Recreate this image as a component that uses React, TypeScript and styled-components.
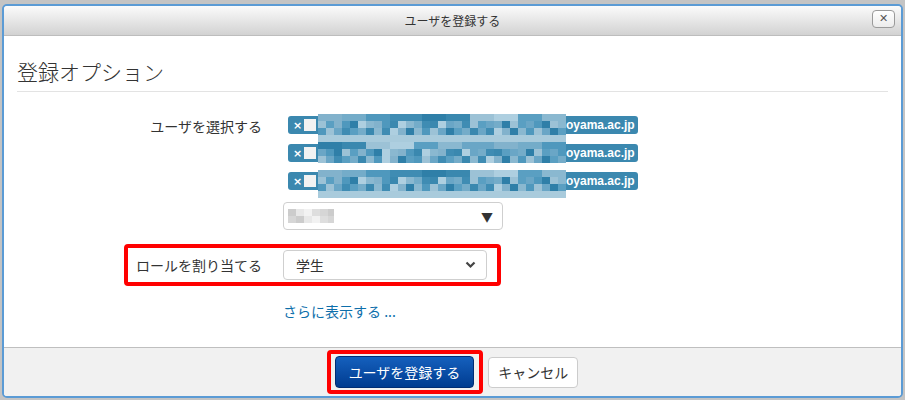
import React from 'react';
import styled, { createGlobalStyle } from 'styled-components';

const GlobalStyle = createGlobalStyle`
    html, body {
        margin: 0;
        padding: 0;
        background: #c4c4c4;
    }
    body {
        font-family: "Noto Sans CJK JP", "Noto Sans", "Liberation Sans", sans-serif;
        color: #333;
    }
`;

const Frame = styled.div`
    width: 905px;
    height: 400px;
    padding: 4px 2px 2px 2px;
    box-sizing: border-box;
`;

const Dialog = styled.div`
    height: 394px;
    box-sizing: border-box;
    border: 2px solid #5b9bd5;
    border-radius: 5px;
    background: #fff;
    display: flex;
    flex-direction: column;
    overflow: hidden;
`;

const Header = styled.div`
    position: relative;
    height: 29px;
    flex-shrink: 0;
    display: flex;
    align-items: center;
    justify-content: center;
    background: linear-gradient(#fbfbfb, #d2d2d2);
    border-bottom: 1px solid #bdbdbd;
    border-radius: 3px 3px 0 0;
    font-size: 12px;
    color: #333;
`;

const CloseButton = styled.button`
    position: absolute;
    right: 6px;
    top: 4px;
    width: 23px;
    height: 18px;
    padding: 0;
    border: 1px solid #9a9a9a;
    border-radius: 4px;
    background: linear-gradient(#ffffff, #ececec);
    color: #555;
    font-size: 11px;
    font-weight: bold;
    line-height: 16px;
    font-family: "DejaVu Sans", sans-serif;
`;

const Body = styled.div`
    flex: 1;
    padding: 0 13px;
`;

const Heading = styled.h3`
    margin: 20px 0 0;
    padding-bottom: 4px;
    border-bottom: 1px solid #e3e3e3;
    font-size: 21px;
    font-weight: 300;
    line-height: 31px;
    color: #333;
`;

const FormRow = styled.div`
    display: grid;
    grid-template-columns: 245px 1fr;
    column-gap: 21px;
    margin-top: 24px;
`;

const Label = styled.div`
    text-align: right;
    font-size: 14px;
    line-height: 20px;
`;

const ChipList = styled.div`
    padding-left: 5px;
`;

const Chip = styled.div`
    display: flex;
    align-items: center;
    width: 350px;
    height: 18px;
    margin-bottom: 10px;
    border-radius: 3px;
    background: #3b88af;
    color: #fff;
    font-family: "Liberation Sans", sans-serif;
    font-size: 12px;
    font-weight: bold;
`;

const ChipRemove = styled.span`
    width: 9px;
    margin-left: 5px;
    font-size: 11px;
    font-family: "DejaVu Sans", sans-serif;
`;

const Avatar = styled.span`
    width: 12px;
    height: 12px;
    margin-left: 2px;
    background: #f2f2f2;
`;

const MosaicSlot = styled.span`
    position: relative;
    width: 248px;
    align-self: stretch;
    margin-left: 2px;
`;

const MosaicArt = styled.svg`
    position: absolute;
    left: 0;
    top: -2px;
`;

const PlainSelect = styled.div`
    display: flex;
    align-items: center;
    justify-content: space-between;
    width: 220px;
    height: 28px;
    box-sizing: border-box;
    margin-top: 12px;
    padding: 0 9px 0 4px;
    border: 1px solid #cfcfcf;
    border-radius: 4px;
    font-size: 12px;
`;

const Highlight = styled.div`
    display: grid;
    grid-template-columns: 134px 204px;
    column-gap: 21px;
    align-items: center;
    width: 377px;
    height: 42px;
    box-sizing: border-box;
    margin: 14px 0 0 107px;
    border: 4px solid #ff0000;
    border-radius: 4px;
`;

const RoleSelect = styled.div`
    display: flex;
    align-items: center;
    justify-content: space-between;
    height: 30px;
    box-sizing: border-box;
    padding: 0 10px 0 12px;
    border: 1px solid #cfcfcf;
    border-radius: 4px;
    font-size: 14px;
`;

const MoreLink = styled.a`
    display: block;
    margin: 15px 0 0 266px;
    color: #0d6fab;
    font-size: 14px;
    line-height: 20px;
    text-decoration: none;
`;

const Footer = styled.div`
    height: 48px;
    flex-shrink: 0;
    display: flex;
    align-items: center;
    justify-content: center;
    gap: 5px;
    border-top: 1px solid #bfbfbf;
    background: #f1f1f1;
`;

const RedFrame = styled.div`
    display: flex;
    align-items: center;
    height: 44px;
    box-sizing: border-box;
    padding: 0 5px 0 4px;
    border: 4px solid #ff0000;
    border-radius: 4px;
`;

const Button = styled.button<{ $primary?: boolean }>`
    height: ${p => (p.$primary ? 32 : 31)}px;
    padding: 0 ${p => (p.$primary ? 13 : 9)}px;
    border-radius: 4px;
    border: 1px solid ${p => (p.$primary ? '#002d74' : '#cccccc')};
    background: ${p => (p.$primary ? 'linear-gradient(#1560bd, #003c90)' : '#fff')};
    color: ${p => (p.$primary ? '#fff' : '#333')};
    font-family: "Noto Sans CJK JP", sans-serif;
    font-size: 14px;
`;

const bluePalette = ['#5a9fc2', '#74acc9', '#3a88af', '#8ab8d0', '#4f98bd', '#9cc2d6', '#6aa6c6', '#3f8cb3', '#aecfe0', '#82b2cc', '#2f7fa8'];
const lightPalette = ['#b9d5e3', '#a9cbdc', '#c2dae6', '#b0cfdf', '#9fc4d8'];
const grayPalette = ['#e8e8e8', '#d6d6d6', '#f2f2f2', '#cccccc', '#dedede'];

const pick = (list: string[], seed: number) => list[Math.abs((seed * 9301 + 49297) % 233280) % list.length];

const Mosaic = ({ seed, extend }: { seed: number; extend: boolean }) => {
    const cols = 31;
    const rows = extend ? 4 : 3;
    const h = extend ? 28 : 21;
    const cells = [];
    for (let r = 0; r < rows; r++) {
        for (let c = 0; c < cols; c++) {
            const palette = r >= 3 ? lightPalette : bluePalette;
            cells.push(<rect key={r + '-' + c} x={c * 8} y={r * 7} width={8} height={7} fill={pick(palette, seed * 131 + r * 37 + c * 17 + c * r)} />);
        }
    }
    return (
        <MosaicArt width={248} height={h} viewBox={`0 0 248 ${h}`}>
            {cells}
        </MosaicArt>
    );
};

const GrayBlur = () => (
    <svg width={46} height={14} viewBox="0 0 46 14">
        {[0, 1, 2, 3, 4, 5].map(c =>
            [0, 1].map(r => <rect key={c + '-' + r} x={c * 8} y={r * 7} width={8} height={7} fill={pick(grayPalette, c * 7 + r * 3 + 1)} />)
        )}
    </svg>
);

const users = [
    { seed: 3, extend: true },
    { seed: 7, extend: false },
    { seed: 3, extend: true },
];

const App = () => {
    return (
        <Frame>
            <GlobalStyle />
            <Dialog>
                <Header>
                    ユーザを登録する
                    <CloseButton>✕</CloseButton>
                </Header>
                <Body>
                    <Heading>登録オプション</Heading>
                    <FormRow>
                        <Label>ユーザを選択する</Label>
                        <div>
                            <ChipList>
                                {users.map((u, i) => (
                                    <Chip key={i}>
                                        <ChipRemove>×</ChipRemove>
                                        <Avatar />
                                        <MosaicSlot>
                                            <Mosaic seed={u.seed} extend={u.extend} />
                                        </MosaicSlot>
                                        oyama.ac.jp
                                    </Chip>
                                ))}
                            </ChipList>
                            <PlainSelect>
                                <GrayBlur />
                                <span>▼</span>
                            </PlainSelect>
                        </div>
                    </FormRow>
                    <Highlight>
                        <Label>ロールを割り当てる</Label>
                        <RoleSelect>
                            学生
                            <svg width={11} height={8} viewBox="0 0 11 8">
                                <polyline points="1.5,1.5 5.5,5.5 9.5,1.5" fill="none" stroke="#444" strokeWidth={2.2} />
                            </svg>
                        </RoleSelect>
                    </Highlight>
                    <MoreLink href="#">さらに表示する ...</MoreLink>
                </Body>
                <Footer>
                    <RedFrame>
                        <Button $primary>ユーザを登録する</Button>
                    </RedFrame>
                    <Button>キャンセル</Button>
                </Footer>
            </Dialog>
        </Frame>
    );
};

export default App;
